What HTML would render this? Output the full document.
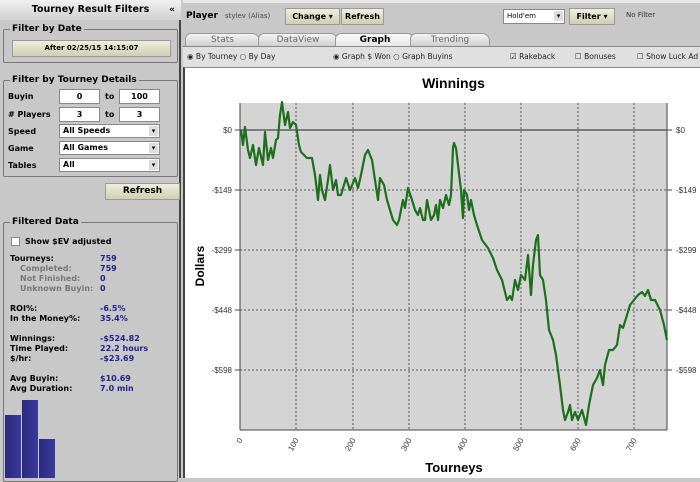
<!DOCTYPE html>
<html><head><style>
*{margin:0;padding:0;box-sizing:border-box}
body{width:700px;height:478px;overflow:hidden;background:#c8c8c8;font-family:"DejaVu Sans",Verdana,sans-serif;font-size:8px;color:#000;position:relative}
.a{position:absolute}
.fs{position:absolute;border:1px solid #777;border-radius:2px}
.lg{position:absolute;top:-6px;left:6px;background:#c8c8c8;padding:0 2px;font-weight:bold;font-size:9px;line-height:11px}
.btn{position:absolute;background:linear-gradient(#eeeedd,#cfcfb4);border:1px solid #999;font-weight:bold;text-align:center;font-size:8px}
.inp{position:absolute;background:#fff;border:1px solid #888;text-align:center;height:15px;line-height:13px;font-weight:bold}
.sel{position:absolute;background:#fff;border:1px solid #888;height:14px;line-height:12px;padding-left:3px;font-weight:bold}
.sel:after{content:"▾";position:absolute;right:1px;top:1px;width:9px;height:10px;background:#ddd;font-size:7px;line-height:10px;text-align:center}
.b{font-weight:bold}
.v{color:#22228a;font-weight:bold}
.g{color:#777;font-weight:bold}
.tab{position:absolute;top:33px;height:13px;background:linear-gradient(#f4f4f4,#cfcfcf);border:1px solid #999;border-bottom:none;border-radius:6px 8px 0 0;text-align:center;color:#666;font-size:9px;line-height:12px}
</style></head><body>
<div class="a" style="left:0;top:0;width:181px;height:478px;background:#c8c8c8;border-right:2px solid #444"></div>
<div class="a" style="left:0;top:0;width:181px;height:20px;background:linear-gradient(#f0f0f0,#d0d0d0);font-weight:bold;font-size:9.5px;line-height:20px;text-align:center">Tourney Result Filters<span style="position:absolute;right:6px;font-size:9px">«</span></div>
<div class="fs" style="left:3px;top:29px;width:175px;height:34px"><div class="lg">Filter by Date</div></div>
<div class="btn" style="left:12px;top:40px;width:159px;height:17px;line-height:15px;font-size:7px">After 02/25/15 14:15:07</div>
<div class="fs" style="left:3px;top:80px;width:175px;height:97px"><div class="lg">Filter by Tourney Details</div></div>
<div class="a b" style="left:8px;top:92px">Buyin</div>
<div class="inp" style="left:59px;top:89px;width:41px">0</div>
<div class="a b" style="left:105px;top:92px">to</div>
<div class="inp" style="left:119px;top:89px;width:41px">100</div>
<div class="a b" style="left:8px;top:110px"># Players</div>
<div class="inp" style="left:59px;top:107px;width:41px">3</div>
<div class="a b" style="left:105px;top:110px">to</div>
<div class="inp" style="left:119px;top:107px;width:41px">3</div>
<div class="a b" style="left:8px;top:127px">Speed</div>
<div class="sel" style="left:59px;top:124px;width:101px">All Speeds</div>
<div class="a b" style="left:8px;top:144px">Game</div>
<div class="sel" style="left:59px;top:141px;width:101px">All Games</div>
<div class="a b" style="left:8px;top:161px">Tables</div>
<div class="sel" style="left:59px;top:158px;width:101px">All</div>
<div class="btn" style="left:105px;top:183px;width:75px;height:17px;line-height:15px;font-size:9px">Refresh</div>
<div class="fs" style="left:3px;top:222px;width:175px;height:260px"><div class="lg">Filtered Data</div></div>
<div class="a" style="left:11px;top:237px;width:9px;height:9px;background:#fff;border:1px solid #888"></div>
<div class="a b" style="left:25px;top:237px">Show $EV adjusted</div>
<div class="a" style="left:10px;top:254px;line-height:10px">
<div class="b">Tourneys:</div><div class="g" style="padding-left:10px">Completed:</div><div class="g" style="padding-left:10px">Not Finished:</div><div class="g" style="padding-left:10px">Unknown Buyin:</div>
<div style="height:10px"></div><div class="b">ROI%:</div><div class="b">In the Money%:</div>
<div style="height:10px"></div><div class="b">Winnings:</div><div class="b">Time Played:</div><div class="b">$/hr:</div>
<div style="height:10px"></div><div class="b">Avg Buyin:</div><div class="b">Avg Duration:</div></div>
<div class="a" style="left:100px;top:254px;line-height:10px">
<div class="v">759</div><div class="v">759</div><div class="v">0</div><div class="v">0</div>
<div style="height:10px"></div><div class="v">-6.5%</div><div class="v">35.4%</div>
<div style="height:10px"></div><div class="v">-$524.82</div><div class="v">22.2 hours</div><div class="v">-$23.69</div>
<div style="height:10px"></div><div class="v">$10.69</div><div class="v">7.0 min</div></div>
<div class="a" style="left:5px;top:415px;width:16px;height:63px;background:linear-gradient(90deg,#2a2a7a,#3a3aa0)"></div>
<div class="a" style="left:22px;top:400px;width:16px;height:78px;background:linear-gradient(90deg,#2a2a7a,#3a3aa0)"></div>
<div class="a" style="left:39px;top:439px;width:16px;height:39px;background:linear-gradient(90deg,#2a2a7a,#3a3aa0)"></div>

<div class="a" style="left:183px;top:0;width:517px;height:30px;background:#c8c8c8;border-top:3px solid #e8e8e8"></div>
<div class="a b" style="left:186px;top:11px;font-size:9px">Player</div>
<div class="a" style="left:225px;top:12px;color:#444;font-size:7px">stylev (Alias)</div>
<div class="btn" style="left:285px;top:8px;width:55px;height:17px;line-height:15px">Change ▾</div>
<div class="btn" style="left:341px;top:8px;width:43px;height:17px;line-height:15px">Refresh</div>
<div class="sel" style="left:503px;top:9px;width:62px;height:15px;font-weight:normal;font-size:7px">Hold'em</div>
<div class="btn" style="left:569px;top:8px;width:46px;height:17px;line-height:15px">Filter ▾</div>
<div class="a" style="left:626px;top:11px;font-size:7px;color:#333">No Filter</div>
<div class="tab" style="left:185px;width:75px">Stats</div>
<div class="tab" style="left:258px;width:80px">DataView</div>
<div class="tab" style="left:335px;width:80px;background:linear-gradient(#fafafa,#e6e6e6);color:#000;font-weight:bold;height:14px">Graph</div>
<div class="tab" style="left:410px;width:80px">Trending</div>
<div class="a" style="left:183px;top:46px;width:517px;height:1px;background:#888"></div>
<div class="a" style="left:183px;top:47px;width:517px;height:20px;background:#e0e0e0;font-size:7.5px;color:#222;white-space:nowrap">
<span class="a" style="left:4px;top:5px">◉ By Tourney ○ By Day</span>
<span class="a" style="left:150px;top:5px">◉ Graph $ Won ○ Graph Buyins</span>
<span class="a" style="left:327px;top:5px">☑ Rakeback</span>
<span class="a" style="left:392px;top:5px">☐ Bonuses</span>
<span class="a" style="left:454px;top:5px">☐ Show Luck Ad</span></div>
<div class="a" style="left:183px;top:67px;width:517px;height:411px;background:#fff;border-left:2px solid #444;border-top:1px solid #888"></div>
<div class="a b" style="left:240px;top:75px;width:427px;text-align:center;font-size:14px;font-family:'Liberation Sans',sans-serif">Winnings</div>
<svg class="a" style="left:183px;top:67px" width="517" height="411" viewBox="183 67 517 411">
<rect x="240" y="103" width="427" height="327" fill="#d4d4d4"/>
<g stroke="#555" stroke-width="1" stroke-dasharray="2,2" fill="none">
<line x1="240" y1="190" x2="667" y2="190"/><line x1="240" y1="250" x2="667" y2="250"/><line x1="240" y1="310" x2="667" y2="310"/><line x1="240" y1="370" x2="667" y2="370"/>
<line x1="296" y1="103" x2="296" y2="430"/><line x1="353" y1="103" x2="353" y2="430"/><line x1="409" y1="103" x2="409" y2="430"/><line x1="465" y1="103" x2="465" y2="430"/><line x1="521" y1="103" x2="521" y2="430"/><line x1="578" y1="103" x2="578" y2="430"/><line x1="634" y1="103" x2="634" y2="430"/>
</g>
<line x1="240" y1="130" x2="667" y2="130" stroke="#222"/>
<g stroke="#444"><line x1="240" y1="103" x2="240" y2="430"/><line x1="240" y1="430" x2="667" y2="430"/><line x1="667" y1="103" x2="667" y2="430"/></g>
<g stroke="#444">
<line x1="235" y1="130" x2="240" y2="130"/><line x1="235" y1="190" x2="240" y2="190"/><line x1="235" y1="250" x2="240" y2="250"/><line x1="235" y1="310" x2="240" y2="310"/><line x1="235" y1="370" x2="240" y2="370"/>
<line x1="667" y1="130" x2="672" y2="130"/><line x1="667" y1="190" x2="672" y2="190"/><line x1="667" y1="250" x2="672" y2="250"/><line x1="667" y1="310" x2="672" y2="310"/><line x1="667" y1="370" x2="672" y2="370"/>
</g>
<g font-family="Liberation Sans,sans-serif" font-size="8" fill="#333">
<text x="232" y="133" text-anchor="end">$0</text><text x="232" y="193" text-anchor="end">-$149</text><text x="232" y="253" text-anchor="end">-$299</text><text x="232" y="313" text-anchor="end">-$448</text><text x="232" y="373" text-anchor="end">-$598</text>
<text x="676" y="133">$0</text><text x="676" y="193">-$149</text><text x="676" y="253">-$299</text><text x="676" y="313">-$448</text><text x="676" y="373">-$598</text>
<g text-anchor="end">
<text transform="translate(243,440) rotate(-60)">0</text><text transform="translate(299,440) rotate(-60)">100</text><text transform="translate(356,440) rotate(-60)">200</text><text transform="translate(412,440) rotate(-60)">300</text><text transform="translate(468,440) rotate(-60)">400</text><text transform="translate(524,440) rotate(-60)">500</text><text transform="translate(581,440) rotate(-60)">600</text><text transform="translate(637,440) rotate(-60)">700</text></g>
</g>
<text x="454" y="472" text-anchor="middle" font-family="Liberation Sans,sans-serif" font-weight="bold" font-size="13">Tourneys</text>
<text transform="translate(204,266) rotate(-90)" text-anchor="middle" font-family="Liberation Sans,sans-serif" font-weight="bold" font-size="12">Dollars</text>
<polyline fill="none" stroke="#1e6e1e" stroke-width="2.2" stroke-linejoin="round" points="241,130 243,145 245,127 248,150 250,158 253,145 256,165 259,148 263,165 265,132 268,160 271,148 273,158 276,140 278,138 280,115 282,102 285,125 288,112 290,128 293,122 296,125 299,145 301,152 304,155 307,158 312,158 315,175 318,200 320,175 322,190 325,200 328,180 330,165 333,190 336,180 338,195 341,195 346,178 350,190 355,178 358,188 361,175 365,155 368,150 372,160 375,180 378,200 380,178 384,185 387,200 390,210 393,220 397,225 399,220 403,200 405,208 408,188 412,200 415,210 418,215 420,208 423,220 425,220 427,200 429,210 431,220 434,215 436,205 438,220 440,200 443,208 446,195 449,205 451,195 453,148 454,143 456,148 458,165 461,190 463,218 464,190 467,195 469,210 471,200 474,215 477,225 482,240 488,248 493,258 497,270 502,280 507,300 510,296 512,300 515,280 518,290 521,275 525,280 528,255 531,295 533,265 536,240 538,235 540,275 543,280 546,300 549,330 553,340 556,355 560,385 563,410 565,420 568,412 570,405 572,420 575,412 578,420 582,410 586,425 589,405 593,385 597,378 600,370 603,385 605,365 609,350 613,350 617,345 620,325 623,328 627,315 630,305 634,300 638,295 642,292 645,296 648,290 651,300 655,300 660,310 664,325 667,340"/>
</svg>
</body></html>
